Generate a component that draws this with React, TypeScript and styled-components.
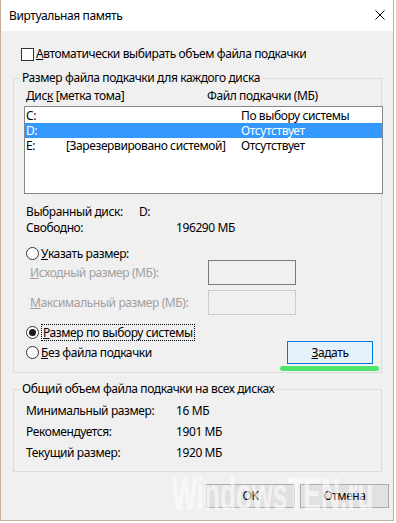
import React from "react";
import styled, { createGlobalStyle } from "styled-components";

const GlobalStyle = createGlobalStyle`
  html, body {
    margin: 0;
    padding: 0;
    background: #ffffff;
  }
  body {
    font-family: "Noto Sans", "Open Sans", sans-serif;
    font-size: 12px;
    letter-spacing: -0.4px;
    line-height: 16px;
    color: #000000;
  }
  * {
    box-sizing: border-box;
  }
`;

const Window = styled.div`
  position: relative;
  width: 394px;
  height: 521px;
  border: 1px solid #c4ae94;
  border-top: none;
  background: #f0f0f0;
  display: flex;
  flex-direction: column;
  overflow: hidden;
`;

const TitleBar = styled.div`
  height: 31px;
  background: #ffffff;
  display: flex;
  align-items: center;
  padding: 0 8px;
`;

const Title = styled.div`
  flex: 1;
`;

const CloseIcon = styled.svg`
  width: 10px;
  height: 10px;
  margin-top: -1px;
`;

const Content = styled.div`
  padding: 16px 12px 0 12px;
  display: flex;
  flex-direction: column;
`;

const CheckRow = styled.label`
  display: flex;
  align-items: center;
  gap: 2px;
  height: 14px;
  margin-left: 8px;
`;

const CheckBox = styled.span`
  width: 13px;
  height: 13px;
  border: 1px solid #333333;
  background: #ffffff;
`;

const Group = styled.fieldset<{ $top: number }>`
  margin: ${(p) => p.$top}px 0 0 0;
  padding: 0;
  width: 369px;
  min-width: 0;
  border: 1px solid #dcdcdc;
`;

const Legend = styled.legend`
  margin-left: 6px;
  padding: 0 2px;
  line-height: 16px;
`;

const GroupInner = styled.div<{ $pad: string }>`
  display: flex;
  flex-direction: column;
  padding: ${(p) => p.$pad};
`;

const HeaderRow = styled.div`
  display: flex;
  padding-left: 2px;
`;

const Col = styled.span<{ $w?: number }>`
  flex: ${(p) => (p.$w ? `0 0 ${p.$w}px` : "1")};
  white-space: nowrap;
`;

const ListBox = styled.div`
  margin-top: 2px;
  width: 359px;
  height: 88px;
  border: 1px solid #828790;
  background: #ffffff;
  padding: 1px 0;
`;

const ListRow = styled.div<{ $selected?: boolean }>`
  display: flex;
  height: 15px;
  line-height: 15px;
  padding-left: 1px;
  background: ${(p) => (p.$selected ? "#3399ff" : "transparent")};
  color: ${(p) => (p.$selected ? "#ffffff" : "#000000")};
`;

const Info = styled.div`
  margin-top: 10px;
  display: flex;
  flex-direction: column;
  padding-left: 2px;
`;

const InfoRow = styled.div`
  display: flex;
  height: 16px;
`;

const RadioRow = styled.label<{ $top?: number; $h?: number }>`
  display: flex;
  align-items: center;
  gap: 2px;
  height: ${(p) => p.$h ?? 16}px;
  margin-top: ${(p) => p.$top ?? 0}px;
  padding-left: 2px;
`;

const Radio = styled.span<{ $checked?: boolean }>`
  flex: 0 0 13px;
  width: 13px;
  height: 13px;
  border: 1px solid #333333;
  border-radius: 50%;
  background: #ffffff;
  display: flex;
  align-items: center;
  justify-content: center;

  &::after {
    content: "";
    display: ${(p) => (p.$checked ? "block" : "none")};
    width: 7px;
    height: 7px;
    border-radius: 50%;
    background: #1a1a1a;
  }
`;

const FocusText = styled.span`
  border: 1px dotted #000000;
  padding: 0 1px;
  line-height: 15px;
`;

const SizeRow = styled.div<{ $top?: number }>`
  display: flex;
  align-items: center;
  height: 25px;
  margin-top: ${(p) => p.$top ?? 0}px;
  padding-left: 6px;
  color: #a0a0a0;
`;

const SizeLabel = styled.span`
  flex: 0 0 178px;
`;

const Edit = styled.div<{ $dark?: boolean }>`
  width: 88px;
  height: 25px;
  border: 1px solid ${(p) => (p.$dark ? "#7a7a7a" : "#cccccc")};
  background: #f0f0f0;
`;

const BottomRow = styled.div`
  display: flex;
  align-items: center;
  height: 23px;
  margin-top: 1px;
`;

const ButtonWrap = styled.div`
  position: relative;
  margin-left: auto;
  margin-right: 8px;
`;

const SetButton = styled.button`
  width: 86px;
  height: 23px;
  padding: 0;
  border: 1px solid #0078d7;
  background: #e5f1fb;
  font: inherit;
  letter-spacing: inherit;
  color: #000000;
`;

const GreenMark = styled.div`
  position: absolute;
  top: calc(100% + 2px);
  left: -7px;
  right: -6px;
  height: 5px;
  border-radius: 3px;
  background: #4fe46c;
`;

const TotalRows = styled.div`
  display: flex;
  flex-direction: column;
  gap: 5px;
`;

const Footer = styled.div`
  display: flex;
  justify-content: flex-end;
  gap: 5px;
  margin-top: 12px;
  padding-right: 4px;
`;

const DlgButton = styled.button`
  width: 89px;
  height: 24px;
  padding: 0;
  border: 1px solid #adadad;
  background: #e1e1e1;
  font: inherit;
  letter-spacing: inherit;
  color: #000000;
`;

const Watermark = styled.div`
  position: absolute;
  left: 171px;
  top: 470px;
  font-family: "Liberation Sans", Arial, sans-serif;
  font-weight: bold;
  font-size: 47px;
  line-height: 47px;
  letter-spacing: 0;
  color: rgba(255, 255, 255, 0.6);
  transform: scaleX(0.56);
  transform-origin: left top;
  white-space: nowrap;
  pointer-events: none;
`;

const disks = [
  { disk: "C:", label: "", size: "По выбору системы" },
  { disk: "D:", label: "", size: "Отсутствует", selected: true },
  { disk: "E:", label: "[Зарезервировано системой]", size: "Отсутствует" },
];

const totals = [
  ["Минимальный размер:", "16 МБ"],
  ["Рекомендуется:", "1901 МБ"],
  ["Текущий размер:", "1920 МБ"],
];

export default function App() {
  return (
    <>
      <GlobalStyle />
      <Window>
        <TitleBar>
          <Title>Виртуальная память</Title>
          <CloseIcon viewBox="0 0 10 10">
            <path d="M0.5 0.5L9.5 9.5M9.5 0.5L0.5 9.5" stroke="#000" strokeWidth="1" fill="none" />
          </CloseIcon>
        </TitleBar>
        <Content>
          <CheckRow>
            <CheckBox />
            <span>
              <u>А</u>втоматически выбирать объем файла подкачки
            </span>
          </CheckRow>

          <Group $top={9}>
            <Legend>Размер файла подкачки для каждого диска</Legend>
            <GroupInner $pad="2px 0 8px 10px">
              <HeaderRow>
                <Col $w={181}>
                  Дис<u>к</u> [метка тома]
                </Col>
                <Col>Файл подкачки (МБ)</Col>
              </HeaderRow>
              <ListBox>
                {disks.map((d) => (
                  <ListRow key={d.disk} $selected={d.selected}>
                    <Col $w={40}>{d.disk}</Col>
                    <Col $w={175}>{d.label}</Col>
                    <Col>{d.size}</Col>
                  </ListRow>
                ))}
              </ListBox>

              <Info>
                <InfoRow>
                  <Col $w={113}>Выбранный диск:</Col>
                  <Col>D:</Col>
                </InfoRow>
                <InfoRow>
                  <Col $w={150}>Свободно:</Col>
                  <Col>196290 МБ</Col>
                </InfoRow>
              </Info>

              <RadioRow $top={11} $h={13}>
                <Radio />
                <span>
                  <u>У</u>казать размер:
                </span>
              </RadioRow>
              <SizeRow>
                <SizeLabel>
                  <u>И</u>сходный размер (МБ):
                </SizeLabel>
                <Edit $dark />
              </SizeRow>
              <SizeRow $top={5}>
                <SizeLabel>
                  <u>М</u>аксимальный размер (МБ):
                </SizeLabel>
                <Edit />
              </SizeRow>

              <RadioRow $top={9}>
                <Radio $checked />
                <FocusText>
                  <u>Р</u>азмер по выбору системы
                </FocusText>
              </RadioRow>
              <BottomRow>
                <RadioRow>
                  <Radio />
                  <span>
                    <u>Б</u>ез файла подкачки
                  </span>
                </RadioRow>
                <ButtonWrap>
                  <SetButton>
                    <u>З</u>адать
                  </SetButton>
                  <GreenMark />
                </ButtonWrap>
              </BottomRow>
            </GroupInner>
          </Group>

          <Group $top={8}>
            <Legend>Общий объем файла подкачки на всех дисках</Legend>
            <GroupInner $pad="6px 0 10px 12px">
              <TotalRows>
                {totals.map(([k, v]) => (
                  <InfoRow key={k}>
                    <Col $w={150}>{k}</Col>
                    <Col>{v}</Col>
                  </InfoRow>
                ))}
              </TotalRows>
            </GroupInner>
          </Group>
        </Content>
        <Footer>
          <DlgButton>OK</DlgButton>
          <DlgButton>Отмена</DlgButton>
        </Footer>
        <Watermark>WindowsTEN.ru</Watermark>
      </Window>
    </>
  );
}
